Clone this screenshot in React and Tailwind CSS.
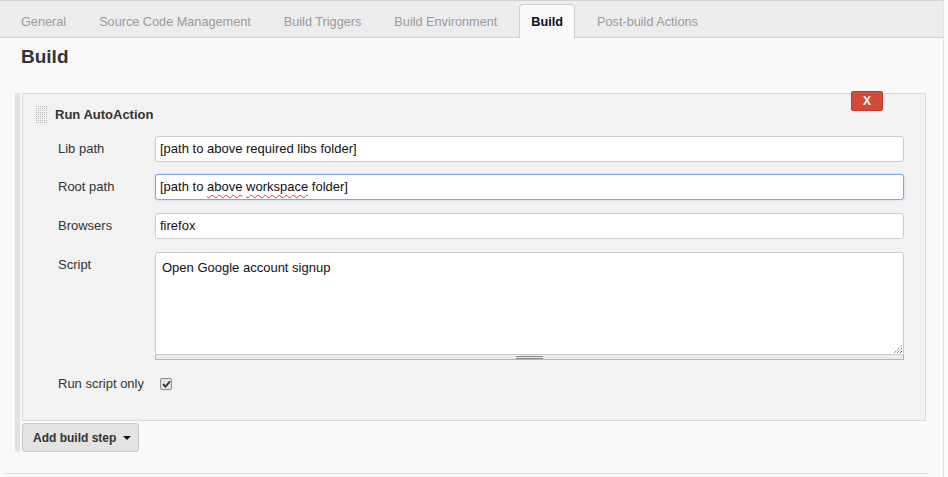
import React from "react";

const tabs = [
  { label: "General" },
  { label: "Source Code Management" },
  { label: "Build Triggers" },
  { label: "Build Environment" },
  { label: "Build", active: true },
  { label: "Post-build Actions" },
];

function Handle() {
  const dots = [];
  for (let r = 0; r < 9; r++) {
    for (let c = 0; c < 6; c++) {
      dots.push(<rect key={r + "-" + c} x={c * 2} y={r * 2} width="1" height="1" fill="#b8b8b8" />);
    }
  }
  return (
    <svg width="12" height="18" viewBox="0 0 12 18" className="shrink-0">
      {dots}
    </svg>
  );
}

function Field({ children, focused }) {
  return (
    <div
      className={
        "h-[26px] w-[749px] bg-white rounded-[3px] border pl-[4px] flex items-center text-[13px] text-[#111] " +
        (focused ? "border-[#7fa3e3] shadow-[0_0_2px_#a9c2ee]" : "border-[#cccccc]")
      }
    >
      <span className="whitespace-pre">{children}</span>
    </div>
  );
}

export default function App() {
  return (
    <div className="w-[948px] h-[477px] overflow-hidden bg-[#fbfbfb] font-['Liberation_Sans',Arial,sans-serif]">
      <div className="w-[944px] h-[477px] bg-[#f9f9f9] border-r border-[#e2e2e2] flex flex-col">
        {/* Tab bar */}
        <div className="h-[38px] shrink-0 bg-[#ececec] border-t border-b border-[#d3d3d3] flex items-end pl-[10px] gap-[11px]">
          {tabs.map((t) => (
            <div
              key={t.label}
              className={
                "h-[34px] -mb-px px-[10px] pt-[2px] border border-b-0 rounded-t-[4px] flex items-center text-[12.7px] " +
                (t.active
                  ? "bg-[#f9f9f9] border-[#cfcfcf] text-[#0a0a1e] font-bold px-[11px]"
                  : "border-transparent text-[#9a9a9a]")
              }
            >
              {t.label}
            </div>
          ))}
        </div>

        {/* Heading */}
        <div className="pl-[21px] pt-[8px] h-[55px] shrink-0">
          <h1 className="text-[19px] leading-[22px] font-bold text-[#333]">Build</h1>
        </div>

        {/* Section */}
        <div className="flex ml-[15px] gap-[2px]">
          <div className="w-[5px] bg-[#e2e2e2]" />
          <div className="flex flex-col">
            <div className="relative w-[904px] h-[328px] border border-[#d9d9d9] bg-[#f2f2f2]">
              <div className="absolute left-[828px] top-[-3px] w-[32px] h-[20px] bg-[#d24a39] border border-[#b93b2b] rounded-[2px] flex items-center justify-center text-white text-[12px] font-bold">
                X
              </div>

              <div className="flex items-center pl-[13px] pt-[12px] h-[30px]">
                <Handle />
                <span className="ml-[7px] text-[13px] font-bold text-[#333] leading-[18px]">Run AutoAction</span>
              </div>

              <div className="pl-[35px] flex flex-col">
                <div className="flex mt-[12px]">
                  <div className="w-[97px] text-[13px] leading-[26px] text-[#333]">Lib path</div>
                  <Field>[path to above required libs folder]</Field>
                </div>
                <div className="flex mt-[12px]">
                  <div className="w-[97px] text-[13px] leading-[26px] text-[#333]">Root path</div>
                  <Field focused>
                    {"[path to "}
                    <span className="underline decoration-wavy decoration-[#e03030] decoration-1 underline-offset-[3px]">above</span>{" "}
                    <span className="underline decoration-wavy decoration-[#e03030] decoration-1 underline-offset-[3px]">workspace</span>
                    {" folder]"}
                  </Field>
                </div>
                <div className="flex mt-[13px]">
                  <div className="w-[97px] text-[13px] leading-[26px] text-[#333]">Browsers</div>
                  <Field>firefox</Field>
                </div>
                <div className="flex mt-[13px]">
                  <div className="w-[97px] text-[13px] leading-[26px] text-[#333]">Script</div>
                  <div className="w-[749px] flex flex-col">
                    <div className="relative h-[103px] bg-white border border-[#cccccc] rounded-t-[3px] pl-[6px] pt-[7px] text-[13px] leading-[16px] text-[#111]">
                      Open Google account signup
                      <svg className="absolute right-[1px] bottom-[1px]" width="9" height="9" viewBox="0 0 9 9">
                        <line x1="1" y1="9" x2="9" y2="1" stroke="#555" strokeWidth="1" strokeDasharray="1 1" />
                        <line x1="4" y1="9" x2="9" y2="4" stroke="#555" strokeWidth="1" strokeDasharray="1 1" />
                        <line x1="7" y1="9" x2="9" y2="7" stroke="#555" strokeWidth="1" />
                      </svg>
                    </div>
                    <div className="h-[5px] bg-[#ececec] border border-t-0 border-[#b4b4b4] flex items-center justify-center">
                      <div className="w-[27px] h-[3px] border-t border-b border-[#8a8a8a]" />
                    </div>
                  </div>
                </div>
                <div className="flex items-center mt-[11px] h-[26px]">
                  <div className="w-[102px] text-[13px] leading-[26px] text-[#333]">Run script only</div>
                  <div className="w-[12px] h-[12px] border border-[#8e8e8e] rounded-[2px] bg-[#e4e4e4] flex items-center justify-center">
                    <svg width="9" height="8" viewBox="0 0 9 8">
                      <path d="M1 4.2 L3.4 6.6 L8 1.4" stroke="#333" strokeWidth="1.8" fill="none" />
                    </svg>
                  </div>
                </div>
              </div>
            </div>

            <div className="mt-[2px] w-[117px] h-[29px] bg-[#e3e3e3] border border-[#c9c9c9] rounded-[3px] flex items-center pl-[10px] text-[12px] font-bold text-[#333]">
              <span>Add build step</span>
              <span className="ml-[7px] w-0 h-0 border-l-[4px] border-r-[4px] border-t-[4px] border-l-transparent border-r-transparent border-t-[#111]" />
            </div>
          </div>
        </div>

        <div className="mt-[21px] ml-[5px] w-[923px] h-px bg-[#dedede]" />
      </div>
    </div>
  );
}
